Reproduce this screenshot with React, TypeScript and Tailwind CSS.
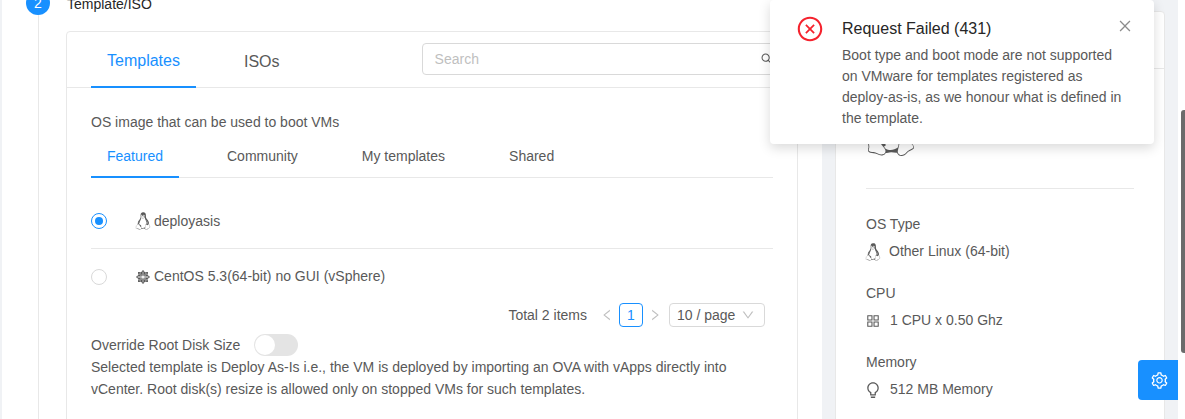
import React from "react";
import {
  AiOutlineAppstore,
  AiOutlineBulb,
  AiOutlineClose,
  AiOutlineCloseCircle,
  AiOutlineDown,
  AiOutlineLeft,
  AiOutlineLinux,
  AiOutlineRight,
  AiOutlineSearch,
  AiOutlineSetting,
} from "react-icons/ai";
import { FaCentos } from "react-icons/fa";

function Summary({ label, icon, value }: { label: string; icon: React.ReactNode; value: string }) {
  return (
    <div className="mb-[21px]">
      <div className="h-[21px] leading-[21px] mb-[6px]">{label}</div>
      <div className="h-[21px] leading-[21px] flex items-center">
        {icon}
        <span>{value}</span>
      </div>
    </div>
  );
}

export default function App() {
  return (
    <div className="relative w-[1185px] h-[419px] overflow-hidden bg-[#f0f2f5] text-[14px] text-[#595959] font-['Liberation_Sans',Arial,sans-serif]">
      <div className="flex items-start pl-[2px] -mt-[9px]">
        {/* Left step card */}
        <div className="w-[820px] h-[440px] bg-white shrink-0 pl-[24px]">
          <div className="flex items-center h-[24px] gap-[17px]">
            <div className="w-[24px] h-[24px] rounded-full bg-[#1890ff] text-white text-[14px] flex items-center justify-center">2</div>
            <div className="text-[14px] text-[#262626] leading-[24px] mt-[1px]">Template/ISO</div>
          </div>
          <div className="flex">
            <div className="w-[1px] ml-[12px] h-[420px] bg-[#e8e8e8] shrink-0" />
            <div className="ml-[27px] mt-[16px] w-[732px] h-[400px] border border-[#e8e8e8] rounded-[4px] shrink-0">
              {/* Card tabs */}
              <div className="flex h-[56px] border-b border-[#e8e8e8] pl-[24px] relative">
                <div className="w-[105px] h-[56px] pt-[4px] border-b-2 border-[#1890ff] text-[#1890ff] text-[16px] flex items-center justify-center">Templates</div>
                <div className="ml-[48px] pt-[3px] text-[16px] flex items-center h-[56px]">ISOs</div>
                <div className="ml-[142px] mt-[11px] w-[362px] h-[32px] border border-[#d9d9d9] rounded-[4px] flex items-center justify-between pl-[12px] pr-[9px] text-[#bfbfbf]">
                  <span>Search</span>
                  <AiOutlineSearch className="text-[14px] text-[#595959]" />
                </div>
              </div>
              <div className="pl-[24px] pr-[24px]">
                <div className="mt-[24px] h-[21px] leading-[21px]">OS image that can be used to boot VMs</div>
                {/* Sub tabs */}
                <div className="flex h-[42px] border-b border-[#e8e8e8] mt-[3px]">
                  <div className="w-[88px] h-[42px] border-b-2 border-[#1890ff] text-[#1890ff] flex items-center justify-center">Featured</div>
                  <div className="ml-[48px] pb-[2px] flex items-center h-[42px]">Community</div>
                  <div className="ml-[64px] pb-[2px] flex items-center h-[42px]">My templates</div>
                  <div className="ml-[64px] pb-[2px] flex items-center h-[42px]">Shared</div>
                </div>
                {/* Template rows */}
                <div className="flex items-center h-[71px] pt-[16px] border-b border-[#e8e8e8] w-[682px]">
                  <span className="w-[16px] h-[16px] rounded-full border border-[#1890ff] flex items-center justify-center">
                    <span className="w-[8px] h-[8px] rounded-full bg-[#1890ff]" />
                  </span>
                  <AiOutlineLinux className="ml-[26px] text-[20px]" />
                  <span className="ml-[1px]">deployasis</span>
                </div>
                <div className="flex items-center h-[55px] w-[682px]">
                  <span className="w-[16px] h-[16px] rounded-full border border-[#d9d9d9]" />
                  <FaCentos className="ml-[28px] text-[16px]" />
                  <span className="ml-[3px]">CentOS 5.3(64-bit) no GUI (vSphere)</span>
                </div>
                {/* Pagination */}
                <div className="flex items-center justify-end h-[24px] w-[674px] -mt-[1px]">
                  <span>Total 2 items</span>
                  <AiOutlineLeft className="ml-[13px] text-[14px] text-[#bfbfbf]" />
                  <span className="ml-[5px] w-[24px] h-[24px] border border-[#1890ff] rounded-[4px] text-[#1890ff] flex items-center justify-center">1</span>
                  <AiOutlineRight className="ml-[5px] text-[14px] text-[#bfbfbf]" />
                  <div className="ml-[7px] w-[96px] h-[24px] border border-[#d9d9d9] rounded-[4px] flex items-center justify-between pl-[7px] pr-[9px]">
                    <span>10 / page</span>
                    <AiOutlineDown className="text-[14px] text-[#bfbfbf]" />
                  </div>
                </div>
                <div className="flex items-center h-[22px] mt-[7px]">
                  <span>Override Root Disk Size</span>
                  <span className="ml-[14px] w-[44px] h-[22px] rounded-full bg-[#e4e4e4] flex items-center pl-[1px]">
                    <span className="w-[20px] h-[20px] rounded-full bg-white" />
                  </span>
                </div>
                <div className="leading-[22px]">
                  Selected template is Deploy As-Is i.e., the VM is deployed by importing an OVA with vApps directly into<br />
                  vCenter. Root disk(s) resize is allowed only on stopped VMs for such templates.
                </div>
              </div>
            </div>
          </div>
        </div>
        {/* Summary card */}
        <div className="ml-[13px] mt-[20px] w-[330px] h-[420px] bg-white border border-[#e8e8e8] rounded-[4px] shrink-0 px-[30px]">
          <div className="h-[57px] border-b border-[#e8e8e8] -mx-[30px]" />
          <div className="h-[119px] flex items-end pb-[28px]">
            <AiOutlineLinux className="text-[64px] -ml-[7px]" />
          </div>
          <div className="border-t border-[#e8e8e8] pt-[25px]">
            <Summary label="OS Type" icon={<AiOutlineLinux className="text-[20px] -ml-[3px] mr-[6px]" />} value="Other Linux (64-bit)" />
            <Summary label="CPU" icon={<AiOutlineAppstore className="text-[16px] -ml-[1px] mr-[9px]" />} value="1 CPU x 0.50 Ghz" />
            <Summary label="Memory" icon={<AiOutlineBulb className="text-[18px] -ml-[2px] mr-[8px]" />} value="512 MB Memory" />
          </div>
        </div>
      </div>

      {/* Scrollbar */}
      <div className="absolute right-0 top-0 bottom-0 w-[7px] bg-white" />
      <div className="absolute right-0 top-[110px] w-[4px] h-[243px] bg-[#6b6b6b] rounded-l-[3px]" />

      {/* Settings button */}
      <div className="absolute left-[1138px] top-[360px] w-[40px] h-[40px] bg-[#1890ff] rounded-l-[4px] flex items-center justify-center text-white">
        <AiOutlineSetting className="text-[19px] ml-[2px]" />
      </div>

      {/* Notification */}
      <div className="absolute left-[770px] top-0 w-[384px] h-[144px] bg-white rounded-[4px] shadow-[0_4px_12px_rgba(0,0,0,0.15)] flex pl-[26px] pt-[15px] pr-[24px]">
        <AiOutlineCloseCircle className="text-[28px] text-[#f5222d] shrink-0" />
        <div className="ml-[18px] mt-[1px] w-[288px]">
          <div className="text-[16px] text-[#262626] leading-[24px] mt-[1px] mb-[4px]">Request Failed (431)</div>
          <div className="leading-[21px]">
            Boot type and boot mode are not supported on VMware for templates registered as deploy-as-is, as we honour what is defined in the template.
          </div>
        </div>
        <AiOutlineClose className="absolute right-[21px] top-[18px] text-[16px] text-[#8c8c8c]" />
      </div>
    </div>
  );
}
